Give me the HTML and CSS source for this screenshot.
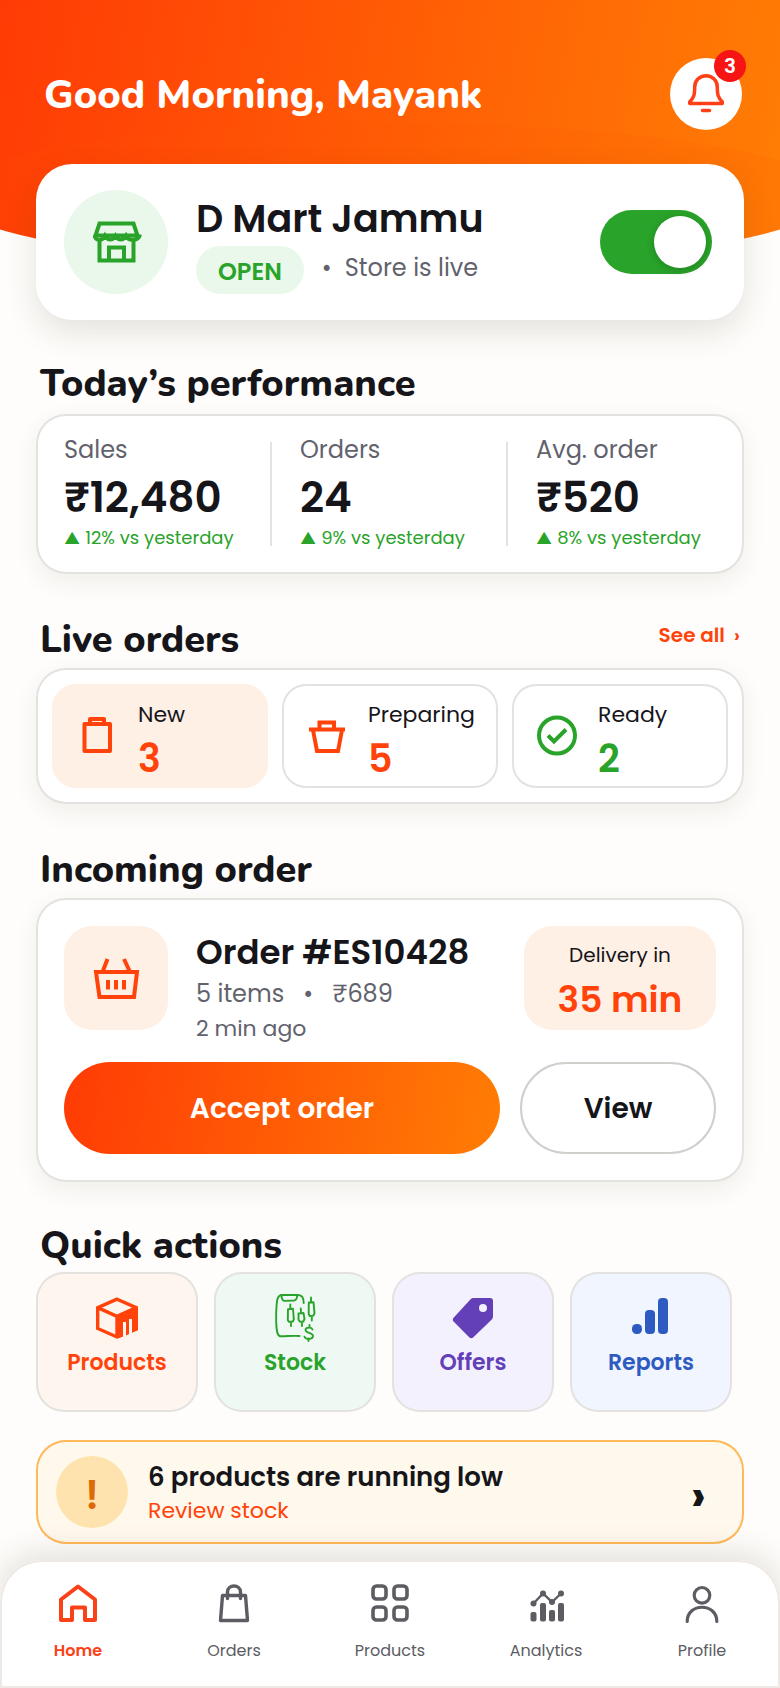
FILE: index.html
```html
<!DOCTYPE html>
<html lang="en">
<head>
<meta charset="utf-8">
<meta name="viewport" content="width=device-width, initial-scale=1">
<title>Store dashboard</title>
<link rel="stylesheet" href="styles.css">
</head>
<body>
<header class="hero">
  <h1 class="greeting">Good Morning, Mayank</h1>
  <button class="bell" type="button" aria-label="Notifications">
    <svg class="icon-72" viewBox="0 0 72 72" fill="none" stroke="currentColor" stroke-width="3.5" stroke-linecap="round" stroke-linejoin="round"><path d="M36 17.8c-6.600 0-11.300 5-11.300 11.200 0 8.500-1 10.500-5 15v1.500h32.600V44c-4-4.500-5-6.500-5-15 0-6.200-4.700-11.200-11.300-11.200z"/><path d="M32.500 52.500h7"/></svg>
    <span class="bell-count">3</span>
  </button>
</header>

<main class="page">
  <section class="store">
    <span class="store-icon">
      <svg class="icon-52" viewBox="0 0 52 52" fill="none" stroke="currentColor" stroke-width="4"><path d="M9.500 7.500h34l4 12H5.500z"/><path d="M5 19.500c-.5 5.500 7.500 6 10 .5 2.500 4.500 8 4.500 10.500 0 2.500 4.500 8 4.500 10.500 0 2.500 5.500 12.500 5 14-1.500"/><path d="M9.500 23v21.500h34V23M19 44V31.500h15V44"/></svg>
    </span>
    <div class="store-info">
      <h2 class="store-name">D Mart Jammu</h2>
      <p class="store-status"><span class="open-badge">OPEN</span><span class="live-dot">•</span><span class="live-text">Store is live</span></p>
    </div>
    <input class="toggle" type="checkbox" role="switch" aria-label="Store is live" checked>
  </section>

  <div class="section-head"><h2 class="section-title">Today’s performance</h2></div>
  <section class="card stats">
    <div class="stat"><span class="stat-label">Sales</span><strong class="stat-value">₹12,480</strong><span class="stat-trend"><span class="up">▲</span>12% vs yesterday</span></div>
    <div class="stat"><span class="stat-label">Orders</span><strong class="stat-value">24</strong><span class="stat-trend"><span class="up">▲</span>9% vs yesterday</span></div>
    <div class="stat"><span class="stat-label">Avg. order</span><strong class="stat-value">₹520</strong><span class="stat-trend"><span class="up">▲</span>8% vs yesterday</span></div>
  </section>

  <div class="section-head is-low"><h2 class="section-title">Live orders</h2><a class="see-all" href="#orders">See all <span class="see-arrow">›</span></a></div>
  <section class="card live" id="orders">
    <div class="live-tile is-new">
      <svg class="icon-42" viewBox="0 0 42 42" fill="none" stroke="currentColor" stroke-width="4"><path d="M8.500 9h25.500v27H8.500zM14 9V4h14v5" stroke-linejoin="round"/></svg>
      <div class="live-info"><span class="live-label">New</span><strong class="live-count">3</strong></div>
    </div>
    <div class="live-tile">
      <svg class="icon-42" viewBox="0 0 42 42" fill="none" stroke="currentColor" stroke-width="4"><path d="M3 14.500h36M7 15l4 21h21l4-21M13.500 14V7.500h14.500V14"/></svg>
      <div class="live-info"><span class="live-label">Preparing</span><strong class="live-count">5</strong></div>
    </div>
    <div class="live-tile is-ready">
      <svg class="icon-42" viewBox="0 0 42 42" fill="none" stroke="currentColor" stroke-width="4"><circle cx="21" cy="20.500" r="18"/><path d="M12 20.500l6 6L30 14.500"/></svg>
      <div class="live-info"><span class="live-label">Ready</span><strong class="live-count">2</strong></div>
    </div>
  </section>

  <div class="section-head is-low"><h2 class="section-title">Incoming order</h2></div>
  <section class="card order">
    <div class="order-top">
      <span class="order-icon">
        <svg class="icon-48" viewBox="0 0 48 48" fill="none" stroke="currentColor" stroke-width="4"><path d="M4 18h41l-3 25H7.500z"/><path d="M15.500 5l-5 13M32 5l6 13"/><path d="M16 26v9.500M24 26v9.500M32 26v9.500"/></svg>
      </span>
      <div class="order-info">
        <h3 class="order-title">Order #ES10428</h3>
        <p class="order-meta"><span>5 items</span><span>•</span><span>₹689</span></p>
        <p class="order-time">2 min ago</p>
      </div>
      <div class="eta"><span class="eta-label">Delivery in</span><strong class="eta-value">35 min</strong></div>
    </div>
    <div class="order-buttons">
      <button class="btn btn-accept" type="button">Accept order</button>
      <button class="btn btn-view" type="button">View</button>
    </div>
  </section>

  <div class="section-head is-tight"><h2 class="section-title">Quick actions</h2></div>
  <nav class="quick" aria-label="Quick actions">
    <a class="quick-tile q-products" href="#products">
      <svg class="icon-48" viewBox="0 0 48 48" fill="none" stroke="currentColor" stroke-width="3.400"><path d="M24 5.200l19.300 8.400v21.400L24 43 4.700 34.500V13.600z"/><path d="M4.700 13.600L24 22.400l19.300-8.800M24 22v21"/><path d="M24 22l20-8.500v22.500L39 38.600V25.500l-3 1.300v13.200l-3 1.500V28.300l-3 1.300v13L24 44.500z" fill="currentColor" stroke="none"/><path d="M31.500 28v18M37.500 25v18" stroke="#fff5ef" stroke-width="3"/></svg>
      <span>Products</span></a>
    <a class="quick-tile q-stock" href="#stock">
      <svg class="icon-48" viewBox="0 0 48 48" fill="none" stroke="currentColor" stroke-width="1.900" stroke-linecap="round" stroke-linejoin="round"><path d="M28.500 42c-7-.6-14 .5-19.500.2C6 41.500 5.500 36 5.200 28 5 19 5.300 12 6.200 6 6.900 2.300 8.500 1 11.500 1h15.500c4 .2 5.500 2 5.700 8"/><path d="M10.500 1.200c0 4 1 5.600 3.500 5.700l9-.4c2.500-.3 3-2 3.200-5"/><path d="M17 15.200l5-.4.8 10.500-1 2.200-4 .2-1-1.700zM19.300 10.500v4M20 28v4"/><path d="M27.500 19.500l5-.5 1 6-1.200 2.500-3.300.3-1.500-2zM29.800 14.500l.2 4.500M31 28.500v3.500"/><path d="M37.800 8.500l4.700-.3 1 11-1.300 2.500-3.500.3-1-2zM40 3.500V8M40.800 22.500v4"/><path d="M41.500 35.500c-1-2.600-7-2.600-7 .6 0 3.300 7.500 2.400 7.500 6 0 3.700-7.500 3.500-8.500.6M38.500 31v2.500M37.500 44.500V47"/></svg>
      <span>Stock</span></a>
    <a class="quick-tile q-offers" href="#offers">
      <svg class="icon-48" viewBox="0 0 48 48" fill="currentColor" fill-rule="evenodd"><path d="M24.500 4H41a3 3 0 0 1 3 3v15.500a4 4 0 0 1-1.200 2.900L24.400 43.200a3 3 0 0 1-4.200 0L4.800 27.800a3 3 0 0 1 0-4.200L21.600 5.200A4 4 0 0 1 24.500 4zM34 10a4 4 0 1 0 0 8 4 4 0 0 0 0-8z"/></svg>
      <span>Offers</span></a>
    <a class="quick-tile q-reports" href="#reports">
      <svg class="icon-48" viewBox="0 0 48 48" fill="currentColor"><rect x="5" y="30" width="10" height="10" rx="4.500"/><rect x="18" y="16" width="10" height="24" rx="4"/><rect x="31" y="4" width="10" height="36" rx="4"/></svg>
      <span>Reports</span></a>
  </nav>

  <a class="alert" href="#stock">
    <span class="alert-mark">!</span>
    <span class="alert-text"><strong class="alert-title">6 products are running low</strong><span class="alert-link">Review stock</span></span>
    <span class="alert-arrow">›</span>
  </a>
</main>

<nav class="tabs" aria-label="Main">
  <a class="tab is-active" href="#home">
    <svg class="icon-48" viewBox="0 0 48 48" fill="none" stroke="currentColor" stroke-width="4" stroke-linejoin="round"><path d="M7 20.500L24 7.500l17 13V41H31V28.500H18V41H7z"/></svg>Home</a>
  <a class="tab" href="#orders">
    <svg class="icon-48" viewBox="0 0 48 48" fill="none" stroke="currentColor" stroke-width="3.400"><path d="M12.500 16.500h23L37.500 41.500h-27z" stroke-linejoin="round"/><path d="M17.500 19.500V13c0-8 13-8 13 0v6.500" stroke-linecap="round"/></svg>Orders</a>
  <a class="tab" href="#products">
    <svg class="icon-48" viewBox="0 0 48 48" fill="none" stroke="currentColor" stroke-width="3.600"><rect x="7" y="7" width="13" height="13" rx="3.500"/><rect x="28" y="7" width="13" height="13" rx="3.500"/><rect x="7" y="28" width="13" height="13" rx="3.500"/><rect x="28" y="28" width="13" height="13" rx="3.500"/></svg>Products</a>
  <a class="tab" href="#analytics">
    <svg class="icon-48" viewBox="0 0 48 48" fill="currentColor"><rect x="8.500" y="33" width="6" height="9.500" rx="2"/><rect x="18" y="24" width="6" height="18.500" rx="2"/><rect x="27" y="31" width="6" height="11.500" rx="2"/><rect x="36" y="24" width="6" height="18.500" rx="2"/><path d="M11.500 24.500L21 14.500l9 8.500 9-8.500" fill="none" stroke="currentColor" stroke-width="2.400"/><circle cx="11.500" cy="24.500" r="3"/><circle cx="21" cy="14.500" r="3"/><circle cx="30" cy="23" r="3"/><circle cx="39" cy="14.500" r="3"/></svg>Analytics</a>
  <a class="tab" href="#profile">
    <svg class="icon-48" viewBox="0 0 48 48" fill="none" stroke="currentColor" stroke-width="3.200" stroke-linecap="round"><circle cx="24" cy="16.300" r="7.800"/><path d="M9.200 42.500c0-19 29.600-19 29.600 0"/></svg>Profile</a>
</nav>
</body>
</html>
```
FILE: styles.css
```css
:root {
  --ink: #15151a;
  --muted: #62626d;
  --flame: #ff430a;
  --green: #29a329;
  --line: #e3e2df;
  --peach: #fff0e6;
  --brand: linear-gradient(100deg, #ff3b05, #ff7d05);
}

* { box-sizing: border-box; }

body {
  margin: 0;
  min-height: 100vh;
  display: flex;
  flex-direction: column;
  background: #fefdfb;
  color: var(--ink);
  font-family: Poppins, Inter, sans-serif;
}

h1, h2, h3, p { margin: 0; }
a { text-decoration: none; }
button, input { font: inherit; margin: 0; }
strong, h3 { font-weight: 600; }
svg { display: block; flex: none; }

.icon-42 { width: 42px; height: 42px; }
.icon-48 { width: 48px; height: 48px; }
.icon-52 { width: 52px; height: 52px; }
.icon-72 { width: 72px; height: 72px; }

/* Hero */
.hero {
  position: relative;
  display: flex;
  align-items: center;
  justify-content: space-between;
  padding: 58px 38px 65px 44px;
  background: var(--brand);
}
.hero::after {
  content: "";
  position: absolute;
  left: 0;
  right: 0;
  bottom: -72px;
  height: 144px;
  background: var(--brand) center / 115% 100%;
  clip-path: ellipse(57% 50% at 50% 50%);
}
.greeting {
  position: relative;
  z-index: 1;
  padding-top: 2px;
  color: #fff;
  font: 800 40px/56px Nunito, "Open Sans", sans-serif;
}
.bell {
  position: relative;
  z-index: 1;
  width: 72px;
  height: 72px;
  padding: 0;
  border: 0;
  border-radius: 50%;
  background: #fff;
  color: #ff3f18;
}
.bell-count {
  position: absolute;
  top: -8px;
  right: -4px;
  width: 32px;
  border-radius: 16px;
  background: #f61414;
  color: #fff;
  font-size: 20px;
  font-weight: 600;
  line-height: 32px;
}

.page { padding: 0 36px; }

/* Store card */
.store {
  position: relative;
  z-index: 1;
  display: flex;
  align-items: center;
  gap: 28px;
  margin-top: -31px;
  padding: 26px 32px 26px 28px;
  border-radius: 36px;
  background: #fff;
  box-shadow: 0 12px 32px rgba(60, 45, 20, .13);
}
.store-icon {
  display: grid;
  place-items: center;
  width: 104px;
  height: 104px;
  border-radius: 50%;
  background: #e9f8ea;
  color: var(--green);
}
.store-info { flex: 1; }
.store-name { padding-top: 2px; font-size: 38px; font-weight: 600; line-height: 54px; }
.store-status { display: flex; font-size: 24px; line-height: 44px; color: var(--muted); }
.open-badge {
  padding: 4px 22px 0;
  border-radius: 24px;
  background: #e9f8ea;
  color: var(--green);
  font-weight: 600;
}
.live-dot { margin: 0 13px 0 18px; }
.toggle {
  appearance: none;
  display: flex;
  justify-content: flex-end;
  width: 112px;
  height: 64px;
  padding: 6px;
  border-radius: 32px;
  background: var(--green);
}
.toggle::before {
  content: "";
  width: 52px;
  height: 52px;
  border-radius: 50%;
  background: #fff;
  box-shadow: 0 2px 8px rgba(0, 0, 0, .2);
}
.toggle:not(:checked) { justify-content: flex-start; background: #b9b9bd; }

/* Section headings */
.section-head {
  display: flex;
  justify-content: space-between;
  margin: 42px 4px 8px;
}
.section-head.is-low { margin: 44px 4px 6px; }
.section-head.is-tight { margin: 42px 4px 4px; }
.section-title { font: 800 38px/44px Nunito, "Open Sans", sans-serif; }
.see-all { color: var(--flame); font-size: 20px; font-weight: 600; line-height: 34px; }
.see-arrow { margin-left: 4px; }

.card {
  border-radius: 30px;
  background: #fff;
  box-shadow: inset 0 0 0 2px var(--line), 0 8px 24px rgba(60, 45, 20, .07);
}

/* Performance */
.stats { display: grid; grid-template-columns: repeat(3, 1fr); }
.stat {
  position: relative;
  display: flex;
  flex-direction: column;
  padding: 20px 0 26px 28px;
}
.stat:not(:last-child)::after {
  content: "";
  position: absolute;
  top: 28px;
  right: 0;
  bottom: 28px;
  width: 2px;
  background: var(--line);
}
.stat-label { color: var(--muted); font-size: 24px; line-height: 32px; }
.stat-value { padding-top: 2px; font-size: 42px; line-height: 60px; }
.stat-trend { color: var(--green); font-size: 18px; line-height: 20px; white-space: nowrap; }
.up { margin-right: 5px; font-family: Inter, sans-serif; font-size: 16px; line-height: 0; }

/* Live orders */
.live {
  display: grid;
  grid-template-columns: repeat(3, 1fr);
  gap: 14px;
  padding: 16px;
}
.live-tile {
  display: flex;
  align-items: center;
  gap: 20px;
  padding-left: 24px;
  border-radius: 24px;
  box-shadow: inset 0 0 0 2px var(--line);
  color: var(--flame);
}
.is-new { background: var(--peach); box-shadow: none; }
.is-ready { color: var(--green); }
.live-info { display: flex; flex-direction: column; padding-top: 16px; }
.live-label { color: var(--ink); font-size: 22px; line-height: 30px; }
.live-count { font-size: 38px; line-height: 58px; }

/* Incoming order */
.order { padding: 28px; }
.order-top { display: flex; align-items: flex-start; gap: 28px; margin-bottom: 14px; }
.order-icon {
  display: grid;
  place-items: center;
  width: 104px;
  height: 104px;
  border-radius: 28px;
  background: var(--peach);
  color: var(--flame);
}
.order-info { flex: 1; }
.order-title { font-size: 34px; line-height: 52px; }
.order-meta { display: flex; gap: 19px; color: var(--muted); font-size: 24px; line-height: 32px; }
.order-time { color: var(--muted); font-size: 22px; line-height: 38px; }
.eta {
  display: flex;
  flex-direction: column;
  width: 192px;
  padding: 14px 0 0;
  border-radius: 28px;
  background: var(--peach);
  text-align: center;
}
.eta-label { font-size: 20px; line-height: 30px; }
.eta-value { color: var(--flame); font-size: 36px; line-height: 60px; }
.order-buttons { display: grid; grid-template-columns: 436fr 196fr; gap: 20px; }
.btn {
  height: 92px;
  padding: 2px 0 0;
  border: 0;
  border-radius: 46px;
  font-size: 28px;
  font-weight: 600;
}
.btn-accept { background: var(--brand); color: #fff; }
.btn-view { border: 2px solid #cfcfcc; background: #fff; color: var(--ink); }

/* Quick actions */
.quick {
  display: grid;
  grid-template-columns: repeat(4, 1fr);
  gap: 16px;
  padding-right: 12px;
}
.quick-tile {
  display: flex;
  flex-direction: column;
  align-items: center;
  padding: 22px 0 28px;
  border-radius: 28px;
  box-shadow: inset 0 0 0 2px var(--line);
  font-size: 22px;
  font-weight: 600;
  line-height: 42px;
}
.q-products { background: #fff5ef; color: var(--flame); }
.q-stock { background: #eff9f4; color: var(--green); }
.q-offers { background: #f4f1ff; color: #6440b8; }
.q-reports { background: #f0f5ff; color: #2e5bc1; }

/* Low stock alert */
.alert {
  display: flex;
  align-items: center;
  gap: 20px;
  margin-top: 28px;
  padding: 16px 38px 16px 20px;
  border-radius: 30px;
  background: #fff8ec;
  box-shadow: inset 0 0 0 2px #ffb95a;
  color: var(--ink);
}
.alert-mark {
  width: 72px;
  padding-top: 6px;
  border-radius: 50%;
  background: #ffe3ae;
  color: #dc6a05;
  font-size: 40px;
  font-weight: 600;
  line-height: 66px;
  text-align: center;
}
.alert-text { display: flex; flex: 1; flex-direction: column; padding-top: 4px; }
.alert-title { font-size: 26px; line-height: 34px; }
.alert-link { color: var(--flame); font-size: 22px; line-height: 34px; }
.alert-arrow { padding-top: 8px; font-size: 46px; font-weight: 700; line-height: 44px; }

/* Bottom navigation */
.tabs {
  position: relative;
  display: grid;
  grid-template-columns: repeat(5, 1fr);
  margin-top: 16px;
  padding: 19px 0 25px;
  border-radius: 42px 42px 0 0;
  background: #fff;
  box-shadow: inset 0 0 0 2px #eee9e5, 0 -6px 32px rgba(60, 45, 20, .14);
}
.tab {
  display: flex;
  flex-direction: column;
  align-items: center;
  gap: 12px;
  color: #5c5c63;
  font-size: 16px;
  line-height: 24px;
}
.tab.is-active { color: #fb4118; font-weight: 600; }
```
